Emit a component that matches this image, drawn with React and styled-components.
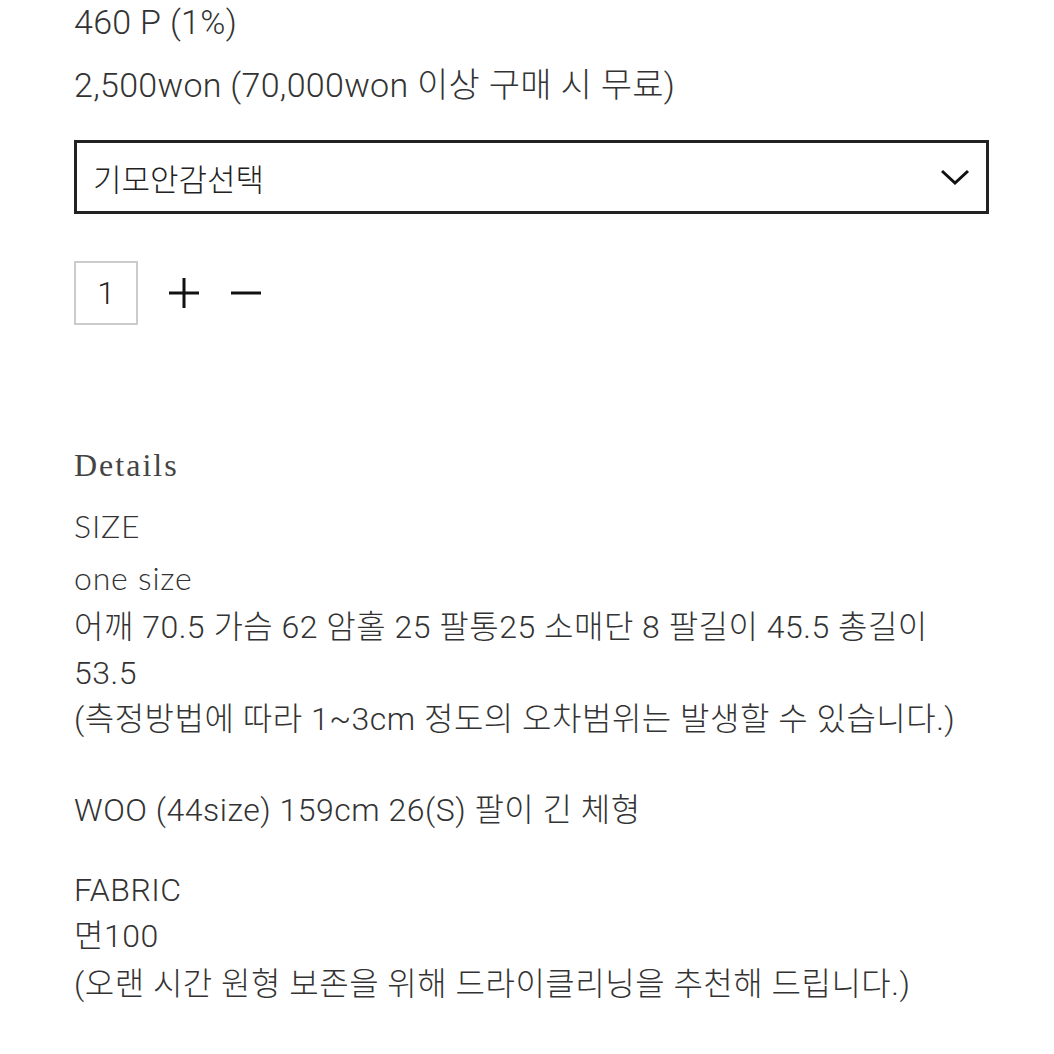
import React from "react";
import styled, { createGlobalStyle } from "styled-components";

const Global = createGlobalStyle`
  html, body { margin: 0; padding: 0; background: #fff; }
  body { font-family: Roboto, "Noto Sans CJK KR", sans-serif; color: #333; }
`;

const Page = styled.div`
  width: 915px;
  padding: 0 0 0 74px;
  display: flex;
  flex-direction: column;
`;

const InfoLine = styled.div`
  font-family: Roboto, "Noto Sans CJK KR", sans-serif;
  font-weight: 300;
  font-size: 34px;
  line-height: 44px;
  letter-spacing: 0.3px;
  color: #333;
  margin-top: ${(p) => p.$mt || 0}px;
`;

const Select = styled.div`
  margin-top: 33px;
  height: 68px;
  border: 3px solid #222;
  display: flex;
  align-items: center;
  justify-content: space-between;
  padding: 0 16px 0 16px;
  font-family: Roboto, "Noto Sans CJK KR", sans-serif;
  font-weight: 300;
  font-size: 31px;
  color: #222;
`;

const QtyRow = styled.div`
  margin-top: 47px;
  display: flex;
  align-items: center;
  gap: 30px;
`;

const QtyBox = styled.div`
  width: 60px;
  height: 60px;
  border: 2px solid #ccc;
  display: flex;
  align-items: center;
  justify-content: center;
  font-family: Roboto, sans-serif;
  font-weight: 300;
  font-size: 32px;
  color: #222;
`;

const QtyButton = styled.button`
  border: 0;
  background: none;
  padding: 0;
  width: 32px;
  height: 32px;
  display: flex;
  align-items: center;
  justify-content: center;
  cursor: pointer;
`;

const Heading = styled.div`
  margin-top: 120px;
  font-family: "Liberation Serif", serif;
  font-weight: 400;
  font-size: 32px;
  letter-spacing: 2px;
  color: #444;
  line-height: 40px;
`;

const Label = styled.div`
  margin-top: ${(p) => p.$mt || 0}px;
  font-family: Lato, "Noto Sans CJK KR", sans-serif;
  font-weight: 300;
  font-size: 32px;
  letter-spacing: 0.8px;
  line-height: 52px;
  color: #333;
`;

const Body = styled.div`
  margin-top: ${(p) => p.$mt || 0}px;
  font-family: Roboto, "Noto Sans CJK KR", sans-serif;
  font-weight: 300;
  font-size: 32px;
  letter-spacing: 0.5px;
  line-height: 46px;
  color: #333;
`;

const Chevron = () => (
  <svg width="30" height="18" viewBox="0 0 30 18" fill="none">
    <path d="M2 3 L15 15 L28 3" stroke="#111" strokeWidth="3" />
  </svg>
);

const Plus = () => (
  <svg width="32" height="32" viewBox="0 0 32 32">
    <path d="M16 1 V31 M1 16 H31" stroke="#111" strokeWidth="3" />
  </svg>
);

const Minus = () => (
  <svg width="32" height="32" viewBox="0 0 32 32">
    <path d="M1 16 H31" stroke="#111" strokeWidth="3" />
  </svg>
);

export default function App() {
  return (
    <>
      <Global />
      <Page>
        <InfoLine>460 P (1%)</InfoLine>
        <InfoLine $mt={19}>2,500won (70,000won 이상 구매 시 무료)</InfoLine>
        <Select>
          <span>기모안감선택</span>
          <Chevron />
        </Select>
        <QtyRow>
          <QtyBox>1</QtyBox>
          <QtyButton aria-label="plus"><Plus /></QtyButton>
          <QtyButton aria-label="minus"><Minus /></QtyButton>
        </QtyRow>
        <Heading>Details</Heading>
        <Label $mt={15}>SIZE</Label>
        <Label>one size</Label>
        <Body>어깨 70.5 가슴 62 암홀 25 팔통25 소매단 8 팔길이 45.5 총길이<br />53.5</Body>
        <Body>(측정방법에 따라 1~3cm 정도의 오차범위는 발생할 수 있습니다.)</Body>
        <Body $mt={45}>WOO (44size) 159cm 26(S) 팔이 긴 체형</Body>
        <Body $mt={34}>FABRIC</Body>
        <Body>면100</Body>
        <Body $mt={2}>(오랜 시간 원형 보존을 위해 드라이클리닝을 추천해 드립니다.)</Body>
      </Page>
    </>
  );
}
